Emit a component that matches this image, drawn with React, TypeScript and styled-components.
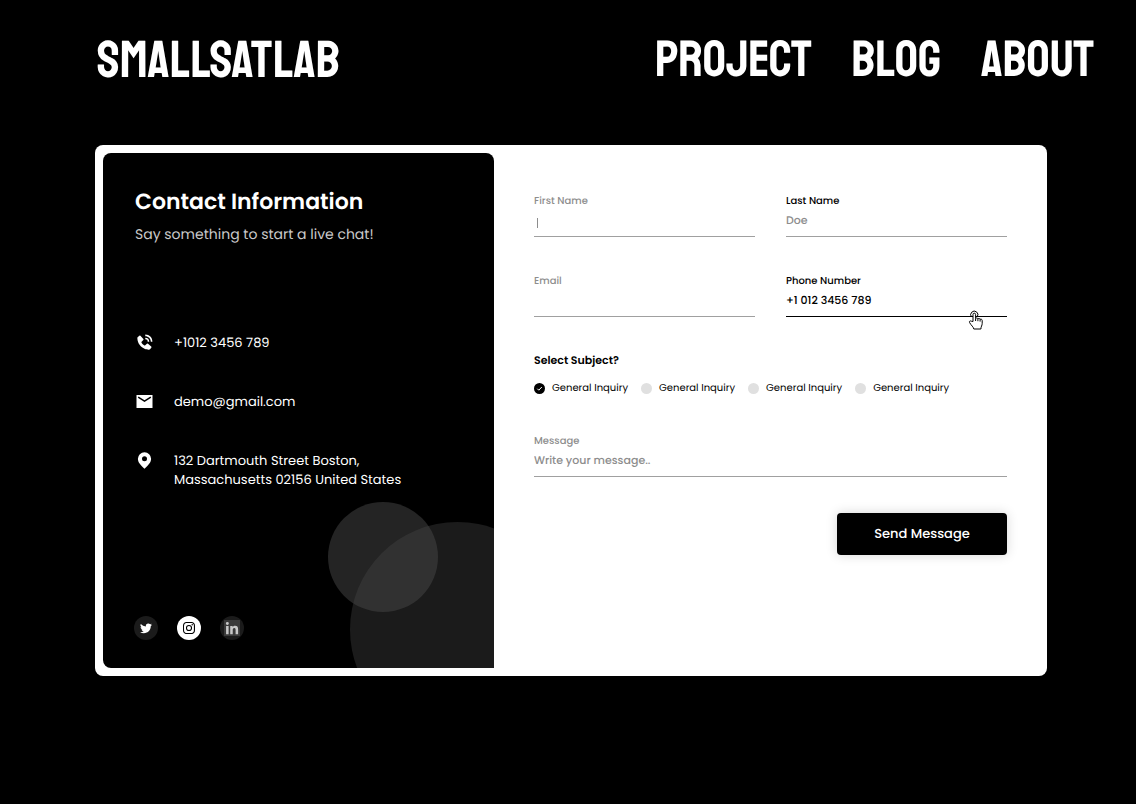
import React from "react";
import styled, { createGlobalStyle } from "styled-components";
import { BiSolidPhoneCall } from "react-icons/bi";
import { BsTwitter } from "react-icons/bs";
import { BiLogoInstagram } from "react-icons/bi";
import { FaLinkedinIn } from "react-icons/fa";

const GlobalStyle = createGlobalStyle`
  *, *::before, *::after { box-sizing: border-box; }
  body {
    margin: 0;
    background: #000;
    font-family: Poppins, Inter, "Liberation Sans", sans-serif;
    text-rendering: geometricPrecision;
  }
`;

const Page = styled.div`
  min-height: 100vh;
  background: #000;
`;

const Header = styled.header`
  display: flex;
  flex-wrap: wrap;
  align-items: center;
  justify-content: space-between;
  gap: 16px 40px;
  padding: 37px 42px 0 97px;
  font-family: Staatliches, "Bebas Neue", "Liberation Sans Narrow", sans-serif;
  font-size: 52px;
  font-weight: 400;
  line-height: 48px;
`;

const HeaderLink = styled.a`
  color: #fff;
  text-decoration: none;
`;

const Nav = styled.nav`
  display: flex;
  flex-wrap: wrap;
  gap: 0 40px;
  font-size: 51px;
`;

const Main = styled.main`
  padding: 60px 89px 64px 95px;
`;

const Card = styled.section`
  display: grid;
  grid-template-columns: 391fr 553fr;
  padding: 8px 0 8px 8px;
  background: #fff;
  border-radius: 8px;
`;

const InfoPanel = styled.aside`
  position: relative;
  display: flex;
  flex-direction: column;
  min-height: 515px;
  padding: 32px;
  overflow: hidden;
  color: #fff;
  background: #000;
  border-radius: 8px 8px 0 8px;
`;

const Bubble = styled.span<{ $size: number; $right: number; $bottom: number; $color: string }>`
  position: absolute;
  right: ${(p) => p.$right}px;
  bottom: ${(p) => p.$bottom}px;
  width: ${(p) => p.$size}px;
  height: ${(p) => p.$size}px;
  border-radius: 50%;
  background: ${(p) => p.$color};
`;

const Title = styled.h1`
  margin: 0;
  font-size: 22px;
  font-weight: 600;
  line-height: 34px;
`;

const Subtitle = styled.p`
  margin: 4px 0 0;
  font-size: 14px;
  line-height: 22px;
  color: #c9c9c9;
`;

const ContactList = styled.address`
  display: flex;
  flex-direction: column;
  gap: 40px;
  margin-top: 88px;
  font-size: 13px;
  font-style: normal;
  line-height: 19px;
`;

const ContactItem = styled.div`
  display: flex;
  gap: 20px;

  svg { flex: none; }
  a { color: inherit; text-decoration: none; }
`;

const Socials = styled.div`
  display: flex;
  gap: 19px;
  margin: auto 0 -4px -1px;
`;

const SocialLink = styled.a<{ $active?: boolean }>`
  display: flex;
  align-items: center;
  justify-content: center;
  width: 24px;
  height: 24px;
  border-radius: 50%;
  color: ${(p) => (p.$active ? "#000" : "#fff")};
  background: ${(p) => (p.$active ? "#fff" : "#1b1b1b")};
`;

const LinkedinTile = styled.span`
  display: flex;
  align-items: flex-end;
  justify-content: center;
  width: 16px;
  height: 16px;
  color: #c8c8c8;
  background: #3a3a3a;
`;

const Form = styled.form`
  display: flex;
  flex-direction: column;
  padding: 40px;
`;

const FieldGrid = styled.div`
  display: grid;
  grid-template-columns: 1fr 1fr;
  gap: 36px 31px;
`;

const Field = styled.div`
  position: relative;
  display: flex;
  flex-direction: column;
`;

const Label = styled.label<{ $strong?: boolean }>`
  font-size: 10px;
  font-weight: 500;
  line-height: 16px;
  color: ${(p) => (p.$strong ? "#000" : "#8d8d8d")};
`;

const TextInput = styled.input<{ $filled?: boolean }>`
  width: 100%;
  height: 28px;
  padding: 0 0 4px;
  border: 0;
  border-bottom: 1px solid ${(p) => (p.$filled ? "#000" : "#a0a0a0")};
  border-radius: 0;
  outline: none;
  background: transparent;
  font-family: inherit;
  font-size: 11px;
  font-weight: 500;
  line-height: 20px;
  text-rendering: inherit;
  color: #000;

  &::placeholder { color: #8d8d8d; opacity: 1; }
`;

const Caret = styled.span`
  position: absolute;
  left: 3px;
  bottom: 9px;
  width: 1px;
  height: 10px;
  background: #8d8d8d;
`;

const TapCursor = styled.svg`
  position: absolute;
  right: 23px;
  bottom: -13px;
`;

const Subjects = styled.fieldset`
  margin: 34px 0 0;
  padding: 0;
  border: 0;
`;

const Legend = styled.legend`
  padding: 0;
  font-size: 11px;
  font-weight: 600;
  line-height: 18px;
`;

const Options = styled.div`
  display: flex;
  flex-wrap: wrap;
  gap: 8px 13px;
  margin-top: 11px;
`;

const Option = styled.label`
  display: flex;
  align-items: center;
  gap: 7px;
  font-size: 10px;
  line-height: 16px;
`;

const Radio = styled.input`
  appearance: none;
  width: 11px;
  height: 11px;
  margin: 0;
  border-radius: 50%;
  background: #e0e0e0;

  &:checked { background: #000; }
`;

const RadioMark = styled.span`
  position: relative;
  display: flex;

  svg {
    position: absolute;
    inset: 0;
    pointer-events: none;
  }
`;

const MessageField = styled(Field)`
  margin-top: 37px;
`;

const SendButton = styled.button`
  align-self: flex-end;
  width: 170px;
  height: 42px;
  margin-top: 36px;
  border: 0;
  border-radius: 4px;
  color: #fff;
  background: #000;
  box-shadow: 0 0 12px rgba(0, 0, 0, 0.16);
  font-family: inherit;
  font-size: 13px;
  font-weight: 500;
  text-rendering: inherit;
`;

const MailIcon = () => (
  <svg width="19" height="19" viewBox="0 0 19 19" aria-hidden="true">
    <path fill="#fff" d="M1.500 3H17.500V16H1.500z" />
    <path fill="none" stroke="#000" strokeWidth="1.500" d="M3.200 5.200l6.300 4 6.300-4" />
  </svg>
);

const PinIcon = () => (
  <svg width="19" height="19" viewBox="0 0 19 19" aria-hidden="true">
    <path
      fill="#fff"
      fillRule="evenodd"
      d="M9.500 1.200A6.600 6.600 0 0 0 2.900 7.800c0 3.700 2.900 6.600 6.600 9.900 3.700-3.300 6.600-6.200 6.600-9.900A6.600 6.600 0 0 0 9.500 1.200zm0 4.100a2.500 2.500 0 1 1 0 5 2.500 2.500 0 0 1 0-5z"
    />
  </svg>
);

const subjects = ["General Inquiry", "General Inquiry", "General Inquiry", "General Inquiry"];

export default function App() {
  return (
    <Page>
      <GlobalStyle />
      <Header>
        <HeaderLink href="#home">SMALLSATLAB</HeaderLink>
        <Nav>
          <HeaderLink href="#project">PROJECT</HeaderLink>
          <HeaderLink href="#blog">BLOG</HeaderLink>
          <HeaderLink href="#about">ABOUT</HeaderLink>
        </Nav>
      </Header>
      <Main>
        <Card>
          <InfoPanel>
            <Bubble $size={215} $right={-71} $bottom={-69} $color="#1b1b1b" />
            <Bubble $size={110} $right={56} $bottom={56} $color="rgba(72, 72, 72, 0.5)" />
            <Title>Contact Information</Title>
            <Subtitle>Say something to start a live chat!</Subtitle>
            <ContactList>
              <ContactItem>
                <BiSolidPhoneCall size={19} />
                <a href="tel:+10123456789">+1012 3456 789</a>
              </ContactItem>
              <ContactItem>
                <MailIcon />
                <a href="mailto:demo@gmail.com">demo@gmail.com</a>
              </ContactItem>
              <ContactItem>
                <PinIcon />
                <span>
                  132 Dartmouth Street Boston,
                  <br />
                  Massachusetts 02156 United States
                </span>
              </ContactItem>
            </ContactList>
            <Socials>
              <SocialLink href="#twitter" aria-label="Twitter">
                <BsTwitter size={12} />
              </SocialLink>
              <SocialLink href="#instagram" aria-label="Instagram" $active>
                <BiLogoInstagram size={16} />
              </SocialLink>
              <SocialLink href="#linkedin" aria-label="LinkedIn">
                <LinkedinTile>
                  <FaLinkedinIn size={14} />
                </LinkedinTile>
              </SocialLink>
            </Socials>
          </InfoPanel>
          <Form onSubmit={(e) => e.preventDefault()}>
            <FieldGrid>
              <Field>
                <Label htmlFor="first-name">First Name</Label>
                <TextInput id="first-name" />
                <Caret />
              </Field>
              <Field>
                <Label htmlFor="last-name" $strong>Last Name</Label>
                <TextInput id="last-name" placeholder="Doe" />
              </Field>
              <Field>
                <Label htmlFor="email">Email</Label>
                <TextInput id="email" type="email" />
              </Field>
              <Field>
                <Label htmlFor="phone" $strong>Phone Number</Label>
                <TextInput id="phone" type="tel" defaultValue="+1 012 3456 789" $filled />
                <TapCursor width="16" height="20" viewBox="0 0 16 20" aria-hidden="true">
                  <path
                    fill="#fff"
                    stroke="#000"
                    strokeLinejoin="round"
                    d="M5 11.500V4.500a1.300 1.300 0 0 1 2.600 0V8.500c.5-.8 2-.7 2.300.3.600-.6 2-.4 2.200.5.700-.4 2.100-.1 2.100 1.200v3c0 2-1.300 3-1.300 5.500H5.800c-.2-2-2.600-3.500-4.200-6.400-.7-1.300.7-2.200 1.700-1.400z"
                  />
                  <path
                    fill="none"
                    stroke="#000"
                    d="M3.500 7A3.600 3.600 0 1 1 9.300 6.700M7.600 8.500v2.500M9.900 8.800v2.400M12.100 9.300v2.300"
                  />
                </TapCursor>
              </Field>
            </FieldGrid>
            <Subjects>
              <Legend>Select Subject?</Legend>
              <Options>
                {subjects.map((subject, i) => (
                  <Option key={i}>
                    <RadioMark>
                      <Radio type="radio" name="subject" value={i} defaultChecked={i === 0} />
                      {i === 0 && (
                        <svg width="11" height="11" viewBox="0 0 11 11" aria-hidden="true">
                          <path fill="none" stroke="#fff" d="M3.300 5.700l1.500 1.500 3-3.200" />
                        </svg>
                      )}
                    </RadioMark>
                    {subject}
                  </Option>
                ))}
              </Options>
            </Subjects>
            <MessageField>
              <Label htmlFor="message">Message</Label>
              <TextInput id="message" placeholder="Write your message.." />
            </MessageField>
            <SendButton type="submit">Send Message</SendButton>
          </Form>
        </Card>
      </Main>
    </Page>
  );
}
